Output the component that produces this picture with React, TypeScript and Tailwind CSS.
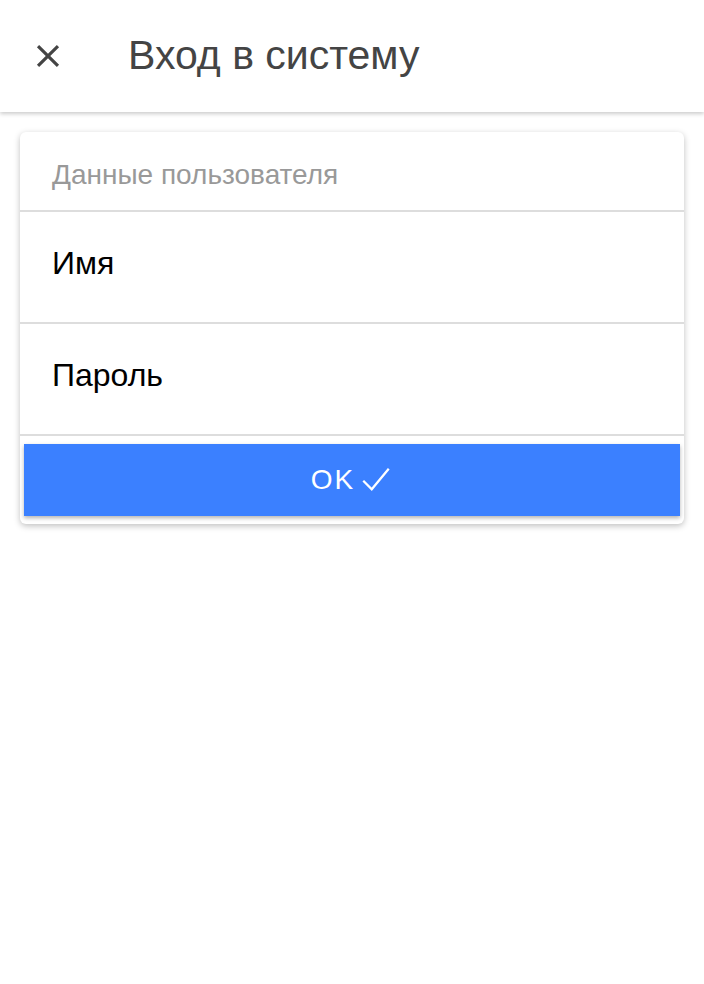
import React from 'react';

const App: React.FC = () => {
  return (
    <div className="min-h-[984px] bg-white font-['Liberation_Sans',Arial,sans-serif]">
      {/* Header */}
      <div className="h-[112px] flex items-center bg-white shadow-[0_2px_4px_rgba(0,0,0,0.2)]">
        <button className="w-[96px] h-full flex items-center pl-[29px] text-[#444]">
          <svg width="38" height="38" viewBox="0 0 24 24" fill="currentColor">
            <path d="M19 6.41 17.59 5 12 10.59 6.41 5 5 6.41 10.59 12 5 17.59 6.41 19 12 13.41 17.59 19 19 17.59 13.41 12z" />
          </svg>
        </button>
        <h1 className="ml-[32px] -mt-[2px] text-[41px] text-[#444] leading-none">Вход в систему</h1>
      </div>

      {/* Card */}
      <div className="mx-[20px] mt-[20px] bg-white rounded-[6px] shadow-[0_2px_6px_rgba(0,0,0,0.25)] overflow-hidden">
        <div className="h-[80px] flex items-center px-[32px] border-b-2 border-[#ddd]">
          <span className="text-[28px] text-[#999] mt-[8px]">Данные пользователя</span>
        </div>
        <div className="h-[112px] flex items-center px-[32px] border-b-2 border-[#ddd]">
          <span className="text-[32px] text-black -mt-[8px]">Имя</span>
        </div>
        <div className="h-[112px] flex items-center px-[32px] border-b-2 border-[#ddd]">
          <span className="text-[32px] text-black -mt-[8px]">Пароль</span>
        </div>
        <div className="px-[4px] pt-[8px] pb-[8px]">
          <button className="w-full h-[72px] bg-[#3b80ff] flex items-center justify-center gap-[4px] text-white shadow-[0_2px_4px_rgba(0,0,0,0.3)]">
            <span className="text-[28px] tracking-[2px]">OK</span>
            <svg width="34" height="34" viewBox="0 0 24 24" fill="none" stroke="currentColor" strokeWidth="1.6">
              <path d="M3 12.5 9 18.5 21 4" />
            </svg>
          </button>
        </div>
      </div>
    </div>
  );
};

export default App;
